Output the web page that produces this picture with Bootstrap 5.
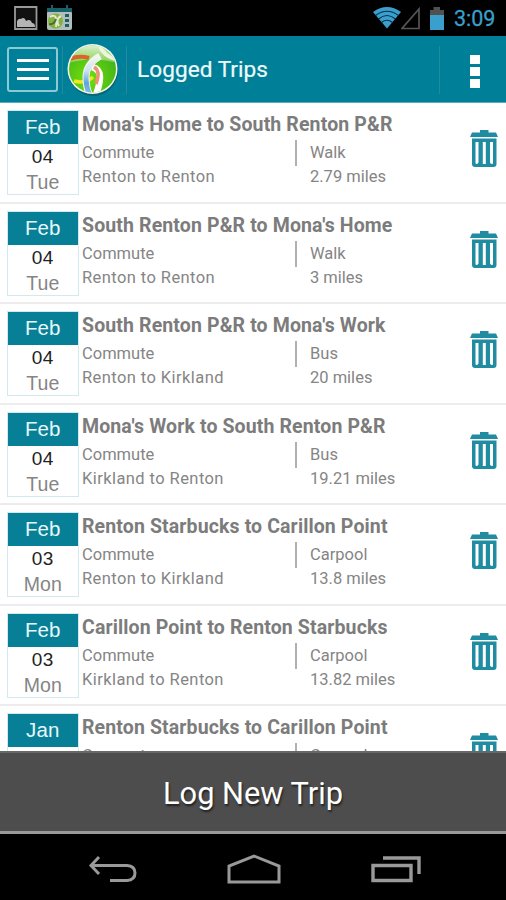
<!DOCTYPE html>
<html lang="en">
<head>
<meta charset="utf-8">
<meta name="viewport" content="width=device-width, initial-scale=1">
<title>Logged Trips</title>
<link href="https://cdn.jsdelivr.net/npm/bootstrap@5.3.0/dist/css/bootstrap.min.css" rel="stylesheet">
<style>
body{font-family:Roboto,"Liberation Sans",sans-serif;height:900px;background:#000}
svg{display:block;flex:none}
.statusbar{height:36px;padding:0 8px 0 14px}
.clock{font-size:21.500px;line-height:36px;color:#3a9fcb;width:44px;margin-left:9px;padding-top:2px;white-space:nowrap;-webkit-text-stroke:.3px #3a9fcb}
.appbar{height:67px;background:#008098;border-bottom:1px solid #59aabb;padding:1px 26px 0 7px}
.menu-btn{width:51px;height:45px;border:2px solid #8dc9d5;border-radius:3px;gap:6px;background:none;padding:0}
.menu-btn span{width:32px;height:3px;background:#fff}
.sep{width:1px;height:48px;background:#218c9f}
.screen-title{font-size:22.6px;line-height:30px;color:#eef9fb;margin:1px 0 0 10px;letter-spacing:.05px;-webkit-text-stroke:.2px #eef9fb}
.dots{gap:3px;margin:4px 0 0 30px}
.dots span{width:10px;height:9px;background:#fff}
.trips{height:648px;background:#fff}
.trip{height:100.5px;border:0;border-bottom:2px solid #ececec;border-radius:0!important;padding:7px 7px 0 7px;background:#fff}
.date-box{width:71.5px;height:85px;border:1px solid #d2eaed;font-family:"Liberation Sans",Arial,sans-serif;font-size:20px;text-align:center;flex:none}
.month{height:33px;line-height:32px;background:#078097;color:#e9f8fb;font-size:20.5px;letter-spacing:.1px}
.day{line-height:26px;color:#222;font-size:19px;letter-spacing:.4px}
.weekday{line-height:25px;color:#858585;font-size:19.500px;letter-spacing:.1px}
.info{margin-left:3.5px;width:381px;color:#858585;font-size:16.5px}
.trip-title{font-size:19.5px;line-height:30px;font-weight:700;color:#7c7c7c;white-space:nowrap;letter-spacing:.12px}
.detail{height:24.3px;line-height:25.500px}
.from{width:213px}
.place{letter-spacing:.42px}
.tick{width:2px;height:26px;background:#b0b0b0;margin-right:13px;flex:none}
.gap-tick{width:15px}
.bin{width:28px;height:38px;margin:20px 0 0 7px;color:#1f8ca2}
.log-btn{height:83px;background:#4d4d4d;border-radius:0;border:0;border-top:2px solid #686868;border-bottom:3px solid #999;color:#fff;font-size:30.8px;text-shadow:1px 2px 2px #222;padding:4px 0 0}
.log-btn:hover{background:#4d4d4d;color:#fff}
.sysnav{height:66px;padding:3px 85px 0 87px}
</style>
<script src="https://cdn.jsdelivr.net/npm/bootstrap@5.3.0/dist/js/bootstrap.bundle.min.js"></script>
</head>
<body class="overflow-hidden">
<svg width="0" height="0" class="position-absolute">
  <symbol id="bin" viewBox="0 0 28 38">
    <path fill="currentColor" d="M10 0h8.500v2.500H26l2 4.500H0l2-4.500h8z"/>
    <path fill="currentColor" fill-rule="evenodd" d="M2 8.500H26.500V34q0 3-3 3H5q-3 0-3-3zM5.500 12V32.500q0 1.500 1 1.500t2-1.500V12zM12.800 12V34h3V12zM20 12V32.500q.8 1.500 2 1.500t1-1.500V12z"/>
  </symbol>
</svg>
<div class="statusbar d-flex align-items-center">
  <svg width="24" height="24" viewBox="0 0 24 24"><path fill="#111" stroke="#999" stroke-width="1.800" d="M1 1h21.500v22H1z"/><path fill="#b5b5b5" d="M3 21v-6q2-3 4-2 2-2 4 0l1 2q3-2 5 0l1 2q3 0 3 4z"/></svg>
  <svg class="ms-2" width="28" height="28" viewBox="0 0 28 28"><rect x="1" y="7" width="25" height="19" rx="2" fill="#b4beb9"/><path fill="#19606c" d="M1 4h25v4H1z"/><path stroke="#19606c" stroke-width="2" d="M6 1v6M21 1v6"/><circle cx="9.500" cy="17" r="7.500" fill="#7fb43f"/><path d="M4 13q8-5 6 10M15 12q-6 3-2 10" fill="none" stroke="#e9e5d5" stroke-width="2"/><path d="M3 20q5 1 7-5" fill="none" stroke="#536a31" stroke-width="2"/><path fill="#195d70" d="M19 10h4v3h-4zM19 15h4v3h-4zM19 20h4v3h-4z"/></svg>
  <svg class="ms-auto" width="28" height="22" viewBox="0 0 28 22"><path fill="#3b9fce" d="M0 5Q14-5 28 5L14 21.500z"/><path d="M2.500 8.500Q14 0 25.500 8.500M5.500 12Q14 5 22.500 12M8.500 15.500Q14 11 19.500 15.500" fill="none" stroke="#063045" stroke-width="1.200"/></svg>
  <svg width="20" height="23" viewBox="0 0 20 23"><path d="M18 2V21.500H1z" fill="none" stroke="#555" stroke-width="1.700"/></svg>
  <svg class="ms-2" width="16" height="23" viewBox="0 0 16 23"><path fill="#505050" d="M4.500 0h6.500v3H15v5H1V3h3.500z"/><path fill="#3b9fce" d="M1 8h14v15H1z"/></svg>
  <div class="clock">3:09</div>
</div>
<nav class="appbar d-flex align-items-center">
  <button class="menu-btn d-flex flex-column align-items-center justify-content-center" aria-label="Menu"><span></span><span></span><span></span></button>
  <div class="sep ms-1"></div>
  <svg class="ms-1" width="52" height="54" viewBox="0 0 52 54">
    <defs>
      <radialGradient id="grass" cx=".4" cy=".65" r=".65"><stop stop-color="#72e00d"/><stop offset="1" stop-color="#3fb01b"/></radialGradient>
      <linearGradient id="shine" x2="0" y2="1"><stop stop-color="#fff" stop-opacity=".9"/><stop offset="1" stop-color="#e4f2bd" stop-opacity=".35"/></linearGradient>
      <linearGradient id="river" x2="0" y2="1"><stop stop-color="#f3f5ee"/><stop offset=".35" stop-color="#c9e2f3"/><stop offset=".65" stop-color="#5ba5e3"/><stop offset="1" stop-color="#8cc3ee"/></linearGradient>
      <clipPath id="globe"><circle cx="25.500" cy="26" r="23.500"/></clipPath>
    </defs>
    <circle cx="26" cy="28" r="25" fill="#056577"/><circle cx="25.500" cy="26" r="25" fill="#f4f8ed"/>
    <g clip-path="url(#globe)" fill="none">
      <path fill="url(#grass)" d="M0 0h52v54H0z"/>
      <path fill="url(#shine)" d="M1 0h50v20Q24 13 2 20z"/>
      <path d="M33 3Q36 13 51 17" stroke="#f1f3dc" stroke-width="4"/>
      <path d="M7 38Q18 41 26 34" stroke="#f0e827" stroke-width="3.500"/>
      <path d="M3 16Q12 12 22 15" stroke="#e0622a" stroke-width="4"/>
      <path d="M25 24Q33 26 33 34T28 54" stroke="#fff" stroke-width="6.500"/>
      <path d="M27 24Q34 28 29 41" stroke="#ee9275" stroke-width="3.500"/>
      <path d="M33 13Q19 21 19 34T24 54" stroke="#f4f5ed" stroke-width="7"/>
      <path d="M33 14Q19 22 19 34T24 54" stroke="url(#river)" stroke-width="5"/>
    </g>
  </svg>
  <div class="sep" style="margin-left:7px"></div>
  <div class="screen-title">Logged Trips</div>
  <div class="sep ms-auto"></div>
  <div class="dots d-flex flex-column"><span></span><span></span><span></span></div>
</nav>
<main class="trips list-group rounded-0 overflow-hidden">
  <div class="trip list-group-item d-flex flex-shrink-0">
    <div class="date-box"><div class="month">Feb</div><div class="day">04</div><div class="weekday">Tue</div></div>
    <div class="info"><div class="trip-title">Mona's Home to South Renton P&amp;R</div>
      <div class="detail d-flex"><span class="from">Commute</span><span class="tick"></span><span>Walk</span></div>
      <div class="detail d-flex"><span class="from place">Renton to Renton</span><span class="gap-tick"></span><span>2.79 miles</span></div></div>
    <svg class="bin"><use href="#bin"/></svg>
  </div>
  <div class="trip list-group-item d-flex flex-shrink-0">
    <div class="date-box"><div class="month">Feb</div><div class="day">04</div><div class="weekday">Tue</div></div>
    <div class="info"><div class="trip-title">South Renton P&amp;R to Mona's Home</div>
      <div class="detail d-flex"><span class="from">Commute</span><span class="tick"></span><span>Walk</span></div>
      <div class="detail d-flex"><span class="from place">Renton to Renton</span><span class="gap-tick"></span><span>3 miles</span></div></div>
    <svg class="bin"><use href="#bin"/></svg>
  </div>
  <div class="trip list-group-item d-flex flex-shrink-0">
    <div class="date-box"><div class="month">Feb</div><div class="day">04</div><div class="weekday">Tue</div></div>
    <div class="info"><div class="trip-title">South Renton P&amp;R to Mona's Work</div>
      <div class="detail d-flex"><span class="from">Commute</span><span class="tick"></span><span>Bus</span></div>
      <div class="detail d-flex"><span class="from place">Renton to Kirkland</span><span class="gap-tick"></span><span>20 miles</span></div></div>
    <svg class="bin"><use href="#bin"/></svg>
  </div>
  <div class="trip list-group-item d-flex flex-shrink-0">
    <div class="date-box"><div class="month">Feb</div><div class="day">04</div><div class="weekday">Tue</div></div>
    <div class="info"><div class="trip-title">Mona's Work to South Renton P&amp;R</div>
      <div class="detail d-flex"><span class="from">Commute</span><span class="tick"></span><span>Bus</span></div>
      <div class="detail d-flex"><span class="from place">Kirkland to Renton</span><span class="gap-tick"></span><span>19.21 miles</span></div></div>
    <svg class="bin"><use href="#bin"/></svg>
  </div>
  <div class="trip list-group-item d-flex flex-shrink-0">
    <div class="date-box"><div class="month">Feb</div><div class="day">03</div><div class="weekday">Mon</div></div>
    <div class="info"><div class="trip-title">Renton Starbucks to Carillon Point</div>
      <div class="detail d-flex"><span class="from">Commute</span><span class="tick"></span><span>Carpool</span></div>
      <div class="detail d-flex"><span class="from place">Renton to Kirkland</span><span class="gap-tick"></span><span>13.8 miles</span></div></div>
    <svg class="bin"><use href="#bin"/></svg>
  </div>
  <div class="trip list-group-item d-flex flex-shrink-0">
    <div class="date-box"><div class="month">Feb</div><div class="day">03</div><div class="weekday">Mon</div></div>
    <div class="info"><div class="trip-title">Carillon Point to Renton Starbucks</div>
      <div class="detail d-flex"><span class="from">Commute</span><span class="tick"></span><span>Carpool</span></div>
      <div class="detail d-flex"><span class="from place">Kirkland to Renton</span><span class="gap-tick"></span><span>13.82 miles</span></div></div>
    <svg class="bin"><use href="#bin"/></svg>
  </div>
  <div class="trip list-group-item d-flex flex-shrink-0">
    <div class="date-box"><div class="month">Jan</div></div>
    <div class="info"><div class="trip-title">Renton Starbucks to Carillon Point</div>
      <div class="detail d-flex"><span class="from">Commute</span><span class="tick"></span><span>Carpool</span></div></div>
    <svg class="bin"><use href="#bin"/></svg>
  </div>
</main>
<button class="log-btn btn w-100 d-block">Log New Trip</button>
<div class="sysnav d-flex align-items-center justify-content-between">
  <svg width="50" height="28" viewBox="0 0 50 28"><path d="M12 2L4 10.500L12 19M4 10.500H40Q48 11 48 18T40 25.500H23" fill="none" stroke="#999" stroke-width="3"/></svg>
  <svg width="54" height="30" viewBox="0 0 54 30"><path d="M2 28V12L27 2L52 12V28z" fill="none" stroke="#999" stroke-width="3"/></svg>
  <svg width="50" height="28" viewBox="0 0 50 28"><path d="M2 10.500H40V25.500H2zM12 3H48V19" fill="none" stroke="#999" stroke-width="3.400"/></svg>
</div>
</body>
</html>
